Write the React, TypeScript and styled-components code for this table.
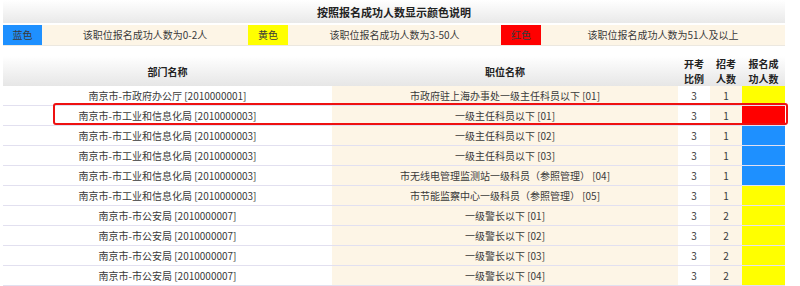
import React from 'react';
import styled, { createGlobalStyle } from 'styled-components';

const GlobalStyle = createGlobalStyle`
  body {
    margin: 0;
    background: #fff;
    font-family: "Noto Sans CJK SC", "Liberation Sans", sans-serif;
    font-size: 10px;
    color: #3a3a3a;
  }
`;

type Level = 'blue' | 'yellow' | 'red';

const levelColor: Record<Level, string> = {
  blue: '#1e90ff',
  yellow: '#ffff00',
  red: '#ff0000',
};

const rows: { dept: string; job: string; ratio: number; count: number; level: Level }[] = [
  { dept: '南京市-市政府办公厅 [2010000001]', job: '市政府驻上海办事处一级主任科员以下 [01]', ratio: 3, count: 1, level: 'yellow' },
  { dept: '南京市-市工业和信息化局 [2010000003]', job: '一级主任科员以下 [01]', ratio: 3, count: 1, level: 'red' },
  { dept: '南京市-市工业和信息化局 [2010000003]', job: '一级主任科员以下 [02]', ratio: 3, count: 1, level: 'blue' },
  { dept: '南京市-市工业和信息化局 [2010000003]', job: '一级主任科员以下 [03]', ratio: 3, count: 1, level: 'blue' },
  { dept: '南京市-市工业和信息化局 [2010000003]', job: '市无线电管理监测站一级科员（参照管理） [04]', ratio: 3, count: 1, level: 'blue' },
  { dept: '南京市-市工业和信息化局 [2010000003]', job: '市节能监察中心一级科员（参照管理） [05]', ratio: 3, count: 1, level: 'yellow' },
  { dept: '南京市-市公安局 [2010000007]', job: '一级警长以下 [01]', ratio: 3, count: 2, level: 'yellow' },
  { dept: '南京市-市公安局 [2010000007]', job: '一级警长以下 [02]', ratio: 3, count: 2, level: 'yellow' },
  { dept: '南京市-市公安局 [2010000007]', job: '一级警长以下 [03]', ratio: 3, count: 2, level: 'yellow' },
  { dept: '南京市-市公安局 [2010000007]', job: '一级警长以下 [04]', ratio: 3, count: 2, level: 'yellow' },
];

const App: React.FC = () => {
  return (
    <Page>
      <GlobalStyle />
      <Title>按照报名成功人数显示颜色说明</Title>
      <Legend>
        <Swatch color={levelColor.blue}>蓝色</Swatch>
        <LegendText>该职位报名成功人数为0-2人</LegendText>
        <Swatch color={levelColor.yellow}>黄色</Swatch>
        <LegendText>该职位报名成功人数为3-50人</LegendText>
        <Swatch color={levelColor.red}>红色</Swatch>
        <LegendText>该职位报名成功人数为51人及以上</LegendText>
      </Legend>

      <TableWrap>
        <Grid>
          <HeadCell>部门名称</HeadCell>
          <HeadCell>职位名称</HeadCell>
          <HeadCell>开考<br />比例</HeadCell>
          <HeadCell>招考<br />人数</HeadCell>
          <HeadCell>报名成<br />功人数</HeadCell>
          {rows.map((r, i) => (
            <React.Fragment key={i}>
              <Cell>{r.dept}</Cell>
              <Cell $tint>{r.job}</Cell>
              <Cell>{r.ratio}</Cell>
              <Cell $tint>{r.count}</Cell>
              <ColorCell color={levelColor[r.level]} />
            </React.Fragment>
          ))}
        </Grid>
        <Highlight />
      </TableWrap>
    </Page>
  );
};

const Page = styled.div`
  width: 782px;
  padding: 0 3px;
`;

const Title = styled.div`
  height: 23px;
  line-height: 25px;
  text-align: center;
  font-size: 11px;
  font-weight: 700;
  color: #222;
  background: linear-gradient(#ffffff, #e9e9e9);
`;

const Legend = styled.div`
  display: grid;
  grid-template-columns: 39px 206px 40px 213px 40px 1fr;
  height: 20px;
  margin-top: 2px;
  background: #fdf5e6;
  border-bottom: 1px solid #ece8e0;
`;

const Swatch = styled.div<{ color: string }>`
  background: ${props => props.color};
  text-align: center;
  line-height: 20px;
`;

const LegendText = styled.div`
  text-align: center;
  line-height: 20px;
`;

const TableWrap = styled.div`
  position: relative;
  margin-top: 10px;
`;

const Grid = styled.div`
  display: grid;
  grid-template-columns: 329px 346px 32px 32px 43px;
`;

const HeadCell = styled.div`
  height: 30px;
  display: flex;
  align-items: center;
  justify-content: center;
  text-align: center;
  font-weight: 700;
  line-height: 15px;
  color: #222;
  background: linear-gradient(#ffffff, #e6e6e6);
`;

const Cell = styled.div<{ $tint?: boolean }>`
  height: 19px;
  line-height: 20px;
  text-align: center;
  white-space: nowrap;
  background: ${props => (props.$tint ? '#fdf5e6' : '#fff')};
  border-bottom: 1px solid #e2e0f0;
`;

const ColorCell = styled.div<{ color: string }>`
  height: 19px;
  background: ${props => props.color};
  border-bottom: 1px solid #e2e0f0;
`;

const Highlight = styled.div`
  position: absolute;
  left: 50px;
  top: 47px;
  width: 731px;
  height: 18px;
  border: 2px solid #ee1111;
  border-radius: 3px;
  pointer-events: none;
`;

export default App;
